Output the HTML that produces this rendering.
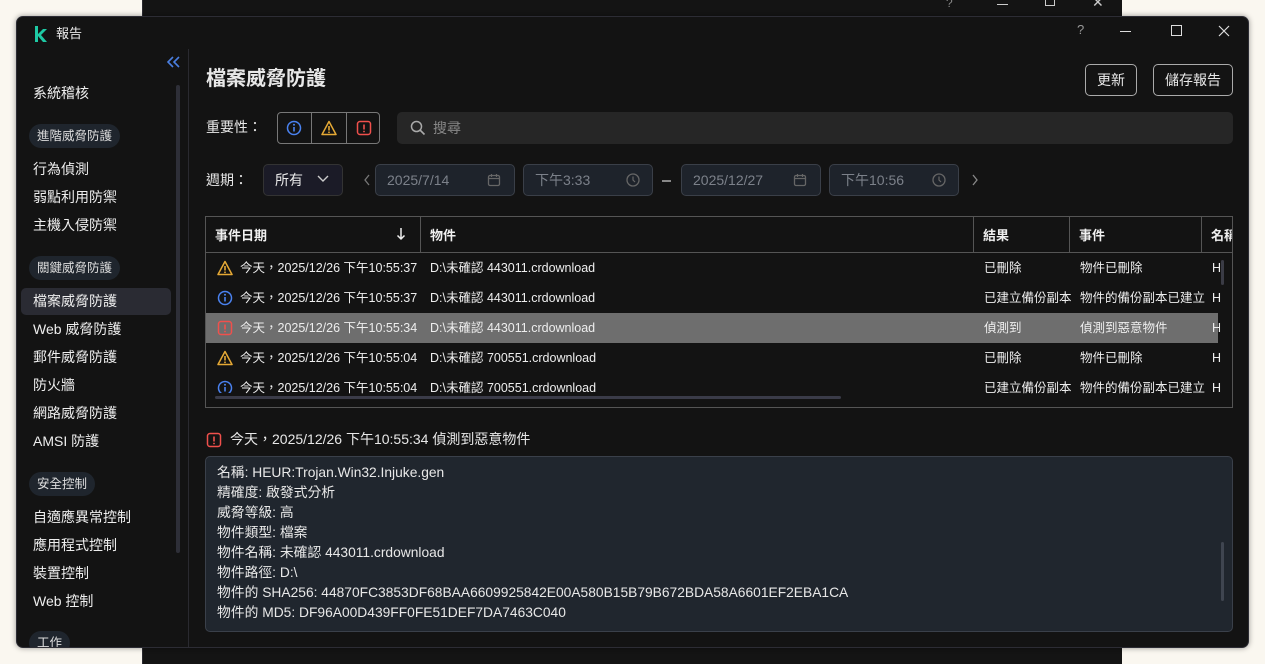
<!DOCTYPE html>
<html><head><meta charset="utf-8"><style>
*{margin:0;padding:0;box-sizing:border-box}
body{width:1265px;height:664px;background:#faf7f0;position:relative;overflow:hidden;font-family:"Liberation Sans","Noto Sans CJK TC",sans-serif;color:#e8e8e8;font-size:14px}
.a{position:absolute;white-space:nowrap}
.back{left:142px;top:0;width:980px;height:664px;background:#141414;border-left:1px solid #2a2a30}
.win{left:16px;top:16px;width:1233px;height:632px;background:#131313;border:1px solid #2c2c34;box-shadow:0 0 6px rgba(0,0,0,.4);border-radius:7px;overflow:hidden}
.pill{background:#1f252d;border-radius:12px;height:24px;line-height:24px;padding:0 8px;font-size:12.5px;color:#ddd}
.nav{font-size:14px;color:#eee}
.btn{border:1px solid #aaa;border-radius:5px;height:32px;line-height:30px;text-align:center;font-size:14px}
.field{background:#1e232b;border:1px solid #3a3f48;border-radius:5px;height:32px;line-height:30px;padding-left:11px;color:#7c818a;font-size:14px}
.cell{font-size:12.5px;color:#eee}
.hd{font-size:13px;font-weight:bold;color:#f0f0f0}
.vl{position:absolute;top:0;width:1px;height:36px;background:#555}
.det{font-size:13.8px;color:#e8e8e8}
</style></head><body>
<div class="a back"></div>
<div class="a" style="left:946px;top:-4px;color:#888;font-size:12px">?</div>
<div class="a" style="left:997px;top:4px;width:11px;height:1px;background:#ccc"></div>
<div class="a" style="left:1045px;top:-4px;width:10px;height:10px;border:1px solid #ccc"></div>
<div class="a" style="left:1092px;top:-6px;color:#ccc;font-size:14px">✕</div>

<div class="a win">
 <svg class="a" style="left:17px;top:9px" width="14" height="16" viewBox="0 0 14 16"><path d="M1 0h3v8l5-5h4l-6 6 6 7h-4l-5-6v6H1z" fill="#1ec9a4"/></svg>
 <div class="a" style="left:39px;top:6px;font-size:13px">報告</div>
 <div class="a" style="left:1060px;top:5px;color:#999;font-size:13px">?</div>
 <div class="a" style="left:1103px;top:14px;width:11px;height:1px;background:#ddd"></div>
 <div class="a" style="left:1154px;top:8px;width:11px;height:11px;border:1px solid #ddd"></div>
 <svg class="a" style="left:1201px;top:8px" width="12" height="12"><path d="M1 1L11 11M11 1L1 11" stroke="#ddd" stroke-width="1.2"/></svg>

 <svg class="a" style="left:149px;top:39px" width="14" height="12"><path d="M7 1L2 6l5 5M13 1L8 6l5 5" stroke="#4a7fe0" stroke-width="1.6" fill="none"/></svg>
 <div class="a" style="left:171px;top:32px;width:1px;height:600px;background:#2a2a30"></div>
 <div class="a" style="left:159px;top:68px;width:4px;height:468px;background:#2e2f38;border-radius:2px"></div>
 <div class="a nav" style="left:16px;top:66px">系統稽核</div>
 <div class="a pill" style="left:12px;top:107px">進階威脅防護</div>
 <div class="a nav" style="left:16px;top:142px">行為偵測</div>
 <div class="a nav" style="left:16px;top:170px">弱點利用防禦</div>
 <div class="a nav" style="left:16px;top:198px">主機入侵防禦</div>
 <div class="a pill" style="left:12px;top:239px">關鍵威脅防護</div>
 <div class="a" style="left:4px;top:271px;width:150px;height:27px;background:#2a2b33;border-radius:5px"></div>
 <div class="a nav" style="left:16px;top:274px">檔案威脅防護</div>
 <div class="a nav" style="left:16px;top:302px">Web 威脅防護</div>
 <div class="a nav" style="left:16px;top:330px">郵件威脅防護</div>
 <div class="a nav" style="left:16px;top:358px">防火牆</div>
 <div class="a nav" style="left:16px;top:386px">網路威脅防護</div>
 <div class="a nav" style="left:16px;top:414px">AMSI 防護</div>
 <div class="a pill" style="left:12px;top:455px">安全控制</div>
 <div class="a nav" style="left:16px;top:490px">自適應異常控制</div>
 <div class="a nav" style="left:16px;top:518px">應用程式控制</div>
 <div class="a nav" style="left:16px;top:546px">裝置控制</div>
 <div class="a nav" style="left:16px;top:574px">Web 控制</div>
 <div class="a pill" style="left:12px;top:614px">工作</div>

 <div class="a" style="left:189px;top:45px;font-size:20px;font-weight:bold">檔案威脅防護</div>
 <div class="a btn" style="left:1068px;top:47px;width:52px">更新</div>
 <div class="a btn" style="left:1136px;top:47px;width:80px">儲存報告</div>

 <div class="a" style="left:189px;top:100px;font-size:14px">重要性：</div>
 <div class="a" style="left:260px;top:95px;width:103px;height:32px;border:1px solid #777;border-radius:4px"></div>
 <div class="a" style="left:294px;top:96px;width:1px;height:30px;background:#777"></div>
 <div class="a" style="left:329px;top:96px;width:1px;height:30px;background:#777"></div>
 <svg class="a" style="left:269px;top:103px" width="16" height="16"><circle cx="8" cy="8" r="6.5" stroke="#4a82f0" stroke-width="1.5" fill="none"/><path d="M8 7v4.5" stroke="#4a82f0" stroke-width="1.6"/><circle cx="8" cy="4.8" r="1" fill="#4a82f0"/></svg>
 <svg class="a" style="left:304px;top:103px" width="16" height="16"><path d="M8 1.5L15 14.5H1z" stroke="#e5a935" stroke-width="1.5" fill="none" stroke-linejoin="round"/><path d="M8 6v4.5" stroke="#e5a935" stroke-width="1.6"/><circle cx="8" cy="12.3" r=".9" fill="#e5a935"/></svg>
 <svg class="a" style="left:339px;top:103px" width="16" height="16"><rect x="1.5" y="1.5" width="13" height="13" rx="2.5" stroke="#f0504c" stroke-width="1.5" fill="none"/><path d="M8 4.5v5" stroke="#f0504c" stroke-width="1.6"/><circle cx="8" cy="11.5" r=".9" fill="#f0504c"/></svg>
 <div class="a" style="left:380px;top:95px;width:836px;height:32px;background:#262626;border-radius:5px"></div>
 <svg class="a" style="left:393px;top:103px" width="16" height="16"><circle cx="6.5" cy="6.5" r="5" stroke="#aaa" stroke-width="1.5" fill="none"/><path d="M10 10l4.5 4.5" stroke="#aaa" stroke-width="1.6"/></svg>
 <div class="a" style="left:416px;top:101px;color:#888;font-size:14px">搜尋</div>

 <div class="a" style="left:189px;top:153px;font-size:14px">週期：</div>
 <div class="a" style="left:246px;top:147px;width:80px;height:32px;background:#1b1b27;border:1px solid #333;border-radius:5px;line-height:30px;padding-left:11px;font-size:14px">所有</div>
 <svg class="a" style="left:300px;top:158px" width="12" height="8"><path d="M1 1l5 5 5-5" stroke="#ccc" stroke-width="1.4" fill="none"/></svg>
 <svg class="a" style="left:346px;top:157px" width="8" height="12"><path d="M6 1L2 6l4 5" stroke="#777" stroke-width="1.3" fill="none"/></svg>
 <div class="a field" style="left:358px;top:147px;width:140px">2025/7/14</div>
 <div class="a field" style="left:506px;top:147px;width:130px">下午3:33</div>
 <div class="a" style="left:645px;top:163px;width:9px;height:1.5px;background:#888"></div>
 <div class="a field" style="left:664px;top:147px;width:140px">2025/12/27</div>
 <div class="a field" style="left:812px;top:147px;width:130px">下午10:56</div>
 <svg class="a" style="left:954px;top:157px" width="8" height="12"><path d="M2 1l4 5-4 5" stroke="#888" stroke-width="1.3" fill="none"/></svg>
 <svg class="a" style="left:470px;top:156px" width="14" height="14"><rect x="1.5" y="2.5" width="11" height="10" rx="1.5" stroke="#666" stroke-width="1.3" fill="none"/><path d="M1.5 5.5h11M4.5 1v3M9.5 1v3" stroke="#666" stroke-width="1.2"/></svg>
 <svg class="a" style="left:776px;top:156px" width="14" height="14"><rect x="1.5" y="2.5" width="11" height="10" rx="1.5" stroke="#666" stroke-width="1.3" fill="none"/><path d="M1.5 5.5h11M4.5 1v3M9.5 1v3" stroke="#666" stroke-width="1.2"/></svg>
 <svg class="a" style="left:609px;top:156px" width="14" height="14"><circle cx="7" cy="7" r="6" stroke="#666" stroke-width="1.3" fill="none"/><path d="M7 3.5V7l2 2" stroke="#666" stroke-width="1.2" fill="none"/></svg>
 <svg class="a" style="left:915px;top:156px" width="14" height="14"><circle cx="7" cy="7" r="6" stroke="#666" stroke-width="1.3" fill="none"/><path d="M7 3.5V7l2 2" stroke="#666" stroke-width="1.2" fill="none"/></svg>

 <div class="a" style="left:188px;top:199px;width:1028px;height:192px;border:1px solid #555;overflow:hidden">
  <div class="a" style="left:0;top:0;width:1029px;height:36px;border-bottom:1px solid #555"></div>
  <div class="vl" style="left:214px"></div><div class="vl" style="left:767px"></div><div class="vl" style="left:863px"></div><div class="vl" style="left:995px"></div>
  <div class="a hd" style="left:9px;top:8px">事件日期</div>
  <svg class="a" style="left:190px;top:10px" width="10" height="14"><path d="M5 1v11M1.5 8.5L5 12l3.5-3.5" stroke="#eee" stroke-width="1.5" fill="none"/></svg>
  <div class="a hd" style="left:224px;top:8px">物件</div>
  <div class="a hd" style="left:777px;top:8px">結果</div>
  <div class="a hd" style="left:873px;top:8px">事件</div>
  <div class="a hd" style="left:1005px;top:8px">名稱</div>
  <div class="a" style="left:0;top:96px;width:1012px;height:30px;background:#6e6e6e"></div>
  <div class="a" style="left:1015px;top:43px;width:3px;height:25px;background:#3a3b45;border-radius:2px"></div>
  <div class="a" style="left:9px;top:179px;width:626px;height:3px;background:#3a3b48;border-radius:2px"></div>
 </div>
 <div class="a" style="left:188px;top:235px;width:1012px">
  <svg class="a" style="left:12px;top:8px" width="16" height="16"><path d="M8 1.5L15 14.5H1z" stroke="#e5a935" stroke-width="1.5" fill="none" stroke-linejoin="round"/><path d="M8 6v4.5" stroke="#e5a935" stroke-width="1.6"/><circle cx="8" cy="12.3" r=".9" fill="#e5a935"/></svg>
  <svg class="a" style="left:12px;top:38px" width="16" height="16"><circle cx="8" cy="8" r="6.5" stroke="#4a82f0" stroke-width="1.5" fill="none"/><path d="M8 7v4.5" stroke="#4a82f0" stroke-width="1.6"/><circle cx="8" cy="4.8" r="1" fill="#4a82f0"/></svg>
  <svg class="a" style="left:12px;top:68px" width="16" height="16"><rect x="1.5" y="1.5" width="13" height="13" rx="2.5" stroke="#f0504c" stroke-width="1.5" fill="none"/><path d="M8 4.5v5" stroke="#f0504c" stroke-width="1.6"/><circle cx="8" cy="11.5" r=".9" fill="#f0504c"/></svg>
  <svg class="a" style="left:12px;top:98px" width="16" height="16"><path d="M8 1.5L15 14.5H1z" stroke="#e5a935" stroke-width="1.5" fill="none" stroke-linejoin="round"/><path d="M8 6v4.5" stroke="#e5a935" stroke-width="1.6"/><circle cx="8" cy="12.3" r=".9" fill="#e5a935"/></svg>
  <svg class="a" style="left:12px;top:128px" width="16" height="13"><circle cx="8" cy="8" r="6.5" stroke="#4a82f0" stroke-width="1.5" fill="none"/><path d="M8 7v4.5" stroke="#4a82f0" stroke-width="1.6"/><circle cx="8" cy="4.8" r="1" fill="#4a82f0"/></svg>
  <div class="a cell" style="left:35px;top:5px">今天，2025/12/26 下午10:55:37</div>
  <div class="a cell" style="left:35px;top:35px">今天，2025/12/26 下午10:55:37</div>
  <div class="a cell" style="left:35px;top:65px">今天，2025/12/26 下午10:55:34</div>
  <div class="a cell" style="left:35px;top:95px">今天，2025/12/26 下午10:55:04</div>
  <div class="a cell" style="left:35px;top:125px">今天，2025/12/26 下午10:55:04</div>
  <div class="a cell" style="left:225px;top:5px">D:\未確認 443011.crdownload</div>
  <div class="a cell" style="left:225px;top:35px">D:\未確認 443011.crdownload</div>
  <div class="a cell" style="left:225px;top:65px">D:\未確認 443011.crdownload</div>
  <div class="a cell" style="left:225px;top:95px">D:\未確認 700551.crdownload</div>
  <div class="a cell" style="left:225px;top:125px">D:\未確認 700551.crdownload</div>
  <div class="a cell" style="left:779px;top:5px">已刪除</div>
  <div class="a cell" style="left:779px;top:35px">已建立備份副本</div>
  <div class="a cell" style="left:779px;top:65px">偵測到</div>
  <div class="a cell" style="left:779px;top:95px">已刪除</div>
  <div class="a cell" style="left:779px;top:125px">已建立備份副本</div>
  <div class="a cell" style="left:875px;top:5px">物件已刪除</div>
  <div class="a cell" style="left:875px;top:35px">物件的備份副本已建立</div>
  <div class="a cell" style="left:875px;top:65px">偵測到惡意物件</div>
  <div class="a cell" style="left:875px;top:95px">物件已刪除</div>
  <div class="a cell" style="left:875px;top:125px">物件的備份副本已建立</div>
  <div class="a cell" style="left:1007px;top:9px">H</div>
  <div class="a cell" style="left:1007px;top:39px">H</div>
  <div class="a cell" style="left:1007px;top:69px">H</div>
  <div class="a cell" style="left:1007px;top:99px">H</div>
  <div class="a cell" style="left:1007px;top:129px">H</div>
 </div>

 <svg class="a" style="left:189px;top:415px" width="16" height="16"><rect x="1.5" y="1.5" width="13" height="13" rx="2.5" stroke="#f0504c" stroke-width="1.5" fill="none"/><path d="M8 4.5v5" stroke="#f0504c" stroke-width="1.6"/><circle cx="8" cy="11.5" r=".9" fill="#f0504c"/></svg>
 <div class="a" style="left:213px;top:412px;font-size:14px">今天，2025/12/26 下午10:55:34 偵測到惡意物件</div>
 <div class="a" style="left:188px;top:439px;width:1028px;height:176px;background:#20262e;border:1px solid #3a404a;border-radius:5px">
  <div class="a" style="left:1015px;top:85px;width:3px;height:59px;background:#3f4550;border-radius:2px"></div>
  <div class="a det" style="left:11px;top:6px;line-height:20px;white-space:pre">名稱: HEUR:Trojan.Win32.Injuke.gen
精確度: 啟發式分析
威脅等級: 高
物件類型: 檔案
物件名稱: 未確認 443011.crdownload
物件路徑: D:\
物件的 SHA256: 44870FC3853DF68BAA6609925842E00A580B15B79B672BDA58A6601EF2EBA1CA
物件的 MD5: DF96A00D439FF0FE51DEF7DA7463C040</div>
 </div>
</div>
</body></html>
